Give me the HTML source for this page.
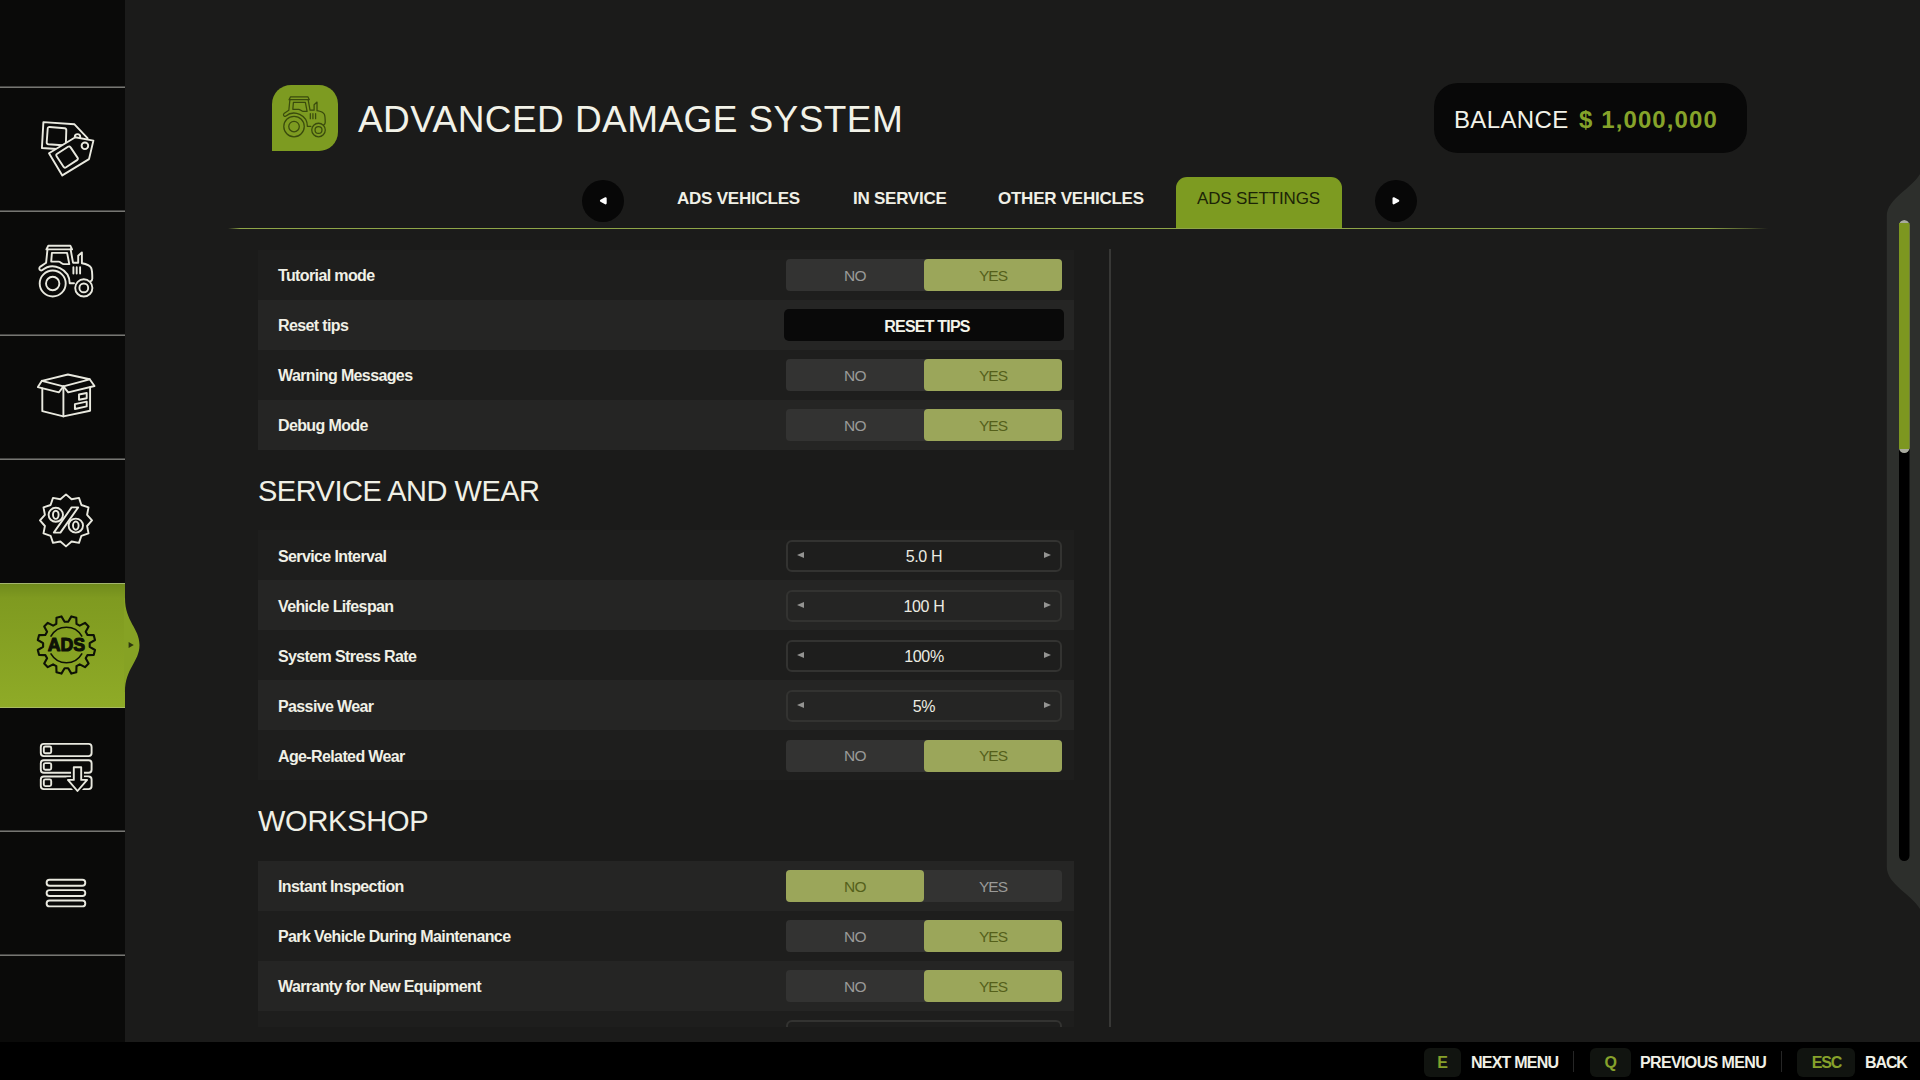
<!DOCTYPE html>
<html>
<head>
<meta charset="utf-8">
<title>Advanced Damage System</title>
<style>
*{box-sizing:border-box;margin:0;padding:0}
html,body{width:1920px;height:1080px;overflow:hidden;background:#1b1b1a}
body{position:relative;font-family:"Liberation Sans",sans-serif;color:#f0f0e6}
.abs{position:absolute}
/* sidebar */
#side{position:absolute;left:0;top:0;width:125px;height:1042px;background:#0a0a09}
.sline{position:absolute;left:0;width:125px;height:2px;background:linear-gradient(180deg,#454543 50%,#767672 50%)}
#sactive{position:absolute;left:0;top:583px;width:125px;height:125px;background:linear-gradient(180deg,#6f8a1c 0%,#7f9a20 12%,#8fab27 100%)}
.sicon{position:absolute;overflow:visible}
/* bottom bar */
#bottom{position:absolute;left:0;top:1042px;width:1920px;height:38px;background:#000}
.key{position:absolute;top:6px;height:29px;border-radius:6px;background:#111410;color:#86a12b;font-weight:700;font-size:16px;line-height:30px;letter-spacing:-.2px;text-align:center}
.klabel{position:absolute;top:6px;height:29px;line-height:29px;font-weight:700;font-size:16px;color:#f0f0e6;white-space:pre}
.ksep{position:absolute;top:9px;width:1px;height:21px;background:#262626}
/* header */
#hicon{position:absolute;left:272px;top:85px;width:66px;height:66px;background:#7d9b21;border-radius:19px 19px 19px 0}
#title{position:absolute;left:358px;top:99px;font-size:37px;line-height:42px;letter-spacing:.42px;white-space:pre;color:#f2f2e8}
#balance{position:absolute;left:1434px;top:83px;width:313px;height:70px;border-radius:24px;background:#080808}
#balance span{position:absolute;top:22.5px;line-height:28px;font-size:24px;white-space:pre}
/* tabs */
.tab{position:absolute;top:186.7px;height:24px;line-height:24px;font-size:17px;font-weight:700;white-space:pre;color:#f0f0e6}
#tabact{position:absolute;left:1176px;top:177px;width:166px;height:52px;border-radius:11px 11px 0 0;background:#7d9b21}
.circ{position:absolute;top:180px;width:42px;height:42px;border-radius:50%;background:#070707}
#gline{position:absolute;left:228px;top:227.5px;width:1540px;height:1.6px;background:linear-gradient(90deg,rgba(143,165,72,0) 0,#8fa548 12px,#8fa548 1480px,rgba(143,165,72,.45) 1520px,rgba(143,165,72,0) 1540px)}
/* list */
#list{position:absolute;left:258px;top:250px;width:816px;height:777px;overflow:hidden}
.row{position:absolute;left:0;width:816px;height:50px;background:#1e1e1d}
.row.alt{background:#252524}
.row .lbl{position:absolute;left:20px;top:0;height:50px;line-height:52px;font-size:16px;font-weight:700;letter-spacing:-.62px;white-space:pre;color:#f0f0e6}
.tog{position:absolute;left:528px;top:9px;width:276px;height:32px;border-radius:4px;background:#333332}
.tog span{position:absolute;top:0;width:138px;height:32px;line-height:33px;text-align:center;font-size:15.5px;letter-spacing:-.5px;color:#9a9a98;border-radius:4px}
.tog .n{left:0}.tog .y{left:138px;letter-spacing:-1px}
.tog .on{background:#9ba65a;color:#55601a}
.step{position:absolute;left:528px;top:9px;width:276px;height:32px;border-radius:6px;border:2px solid #333331;background:transparent}
.step .v{position:absolute;left:0;top:0;width:272px;height:28px;line-height:31px;text-align:center;font-size:16px;letter-spacing:-.3px;color:#ecece2}
.step i{position:absolute;top:10.6px;width:0;height:0;border-top:3.9px solid transparent;border-bottom:3.9px solid transparent}
.step i.l{left:9px;border-right:7px solid #949492}
.step i.r{right:9px;border-left:7px solid #949492}
.btn{position:absolute;left:526px;top:9px;width:280px;height:32px;border-radius:5px;background:#090909;text-align:center;line-height:35px;font-size:16px;font-weight:700;letter-spacing:-.8px;padding-left:6px;color:#f4f4ea}
.sec{position:absolute;left:0;height:40px;line-height:40px;font-size:29px;letter-spacing:.1px;white-space:pre;color:#f0f0e6}
#vdiv{position:absolute;left:1109px;top:249px;width:2px;height:778px;background:#383836}
.s2 .lbl{top:1px}
.s2 .tog,.s2 .step{top:9.5px}
.s2 .step .v{line-height:29px}
.s2 .tog span{line-height:31px}
</style>
</head>
<body>


<!-- SIDEBAR -->
<div id="side">
  <div class="sline" style="top:86px"></div>
  <div class="sline" style="top:210px"></div>
  <div class="sline" style="top:334px"></div>
  <div class="sline" style="top:458px"></div>
  <div id="sactive"><div style="position:absolute;left:0;top:0;width:125px;height:1px;background:#a3b56f"></div><div style="position:absolute;left:0;bottom:0;width:125px;height:1px;background:#a9bb62"></div></div>
  <div class="sline" style="top:830px"></div>
  <div class="sline" style="top:954px"></div>

  <!-- sidebar icons -->
  <svg class="sicon" style="top:108px;left:26px" width="80" height="80" viewBox="0 0 80 80" fill="none" stroke="#e9e9df" stroke-width="1.9" stroke-linejoin="round" stroke-linecap="round">
    <path d="M17.4 14.1 L48.5 16.3 L61.5 30.2 L60 43 L15.9 40 Z"/>
    <path d="M23.6 19 L38.6 20.3 Q40.4 20.5 40.3 22.3 L39.8 37.5 L22.4 36.2 Q20.6 36 20.7 34.2 L21.7 20.7 Q21.8 18.9 23.6 19 Z"/>
    <circle cx="51.5" cy="28.8" r="2.7"/>
    <path d="M23 45.2 L49.3 29.3 L67.4 32.6 L63 51.1 L36.3 67.4 Z" fill="#0a0a09"/>
    <path d="M31.2 45.7 L42 38.8 Q43.6 37.8 44.6 39.4 L51.5 49.6 Q52.5 51.1 51 52.1 L40.1 59.3 Q38.5 60.3 37.5 58.8 L30.6 48.2 Q29.6 46.7 31.2 45.7 Z"/>
    <circle cx="58.9" cy="37.8" r="3.3"/>
  </svg>
  <svg class="sicon" style="top:232px;left:26px" width="80" height="80" viewBox="0 0 80 80" stroke="#e9e9df" stroke-width="1.9"><g fill="none" stroke-linecap="round" stroke-linejoin="round">
      <path d="M22.3 13.7 L44.3 13.7 L46.1 17.4 L20.4 17.4 Z"/>
      <path d="M21.5 17.2 L20.1 30.8 L14.4 34.6 C12.9 35.7 13 37.5 14.3 38.3 C15 38.7 15.6 38.6 16 38.3 A17 17 0 0 1 43.7 51.3 L48 51.3"/>
      <path d="M44.6 17.2 L47 30.7 L52.2 30.7 L52.2 23.7 L55.9 20.4 L55.9 31.3 C60 32 64 33.5 65.2 36 C66.3 38.5 66.3 40 66.3 46.5 Q66.3 48.5 64.5 49.4"/>
      <path d="M25.9 20.9 L41.1 20.9 L43.3 32.1 L37.8 32.1 C36 32.1 34.5 29.6 32.5 29.6 L25.2 29.6 Z"/>
      <path d="M47.4 35.2 V41.5 M50.7 35.2 V41.5 M54.1 35.2 V41.5"/>
      <circle cx="26.7" cy="51.5" r="13"/><circle cx="26.7" cy="51.5" r="6.7"/>
      <circle cx="57.8" cy="55.9" r="8.6"/><circle cx="57.8" cy="55.9" r="4.4"/>
    </g></svg>
  <svg class="sicon" style="top:356px;left:26px" width="80" height="80" viewBox="0 0 80 80" fill="none" stroke="#e9e9df" stroke-width="1.9" stroke-linejoin="round" stroke-linecap="round">
    <path d="M15.9 24.8 L41.9 18.5 L63.7 23.3 L37.4 30.4 Z"/>
    <path d="M15.9 24.8 L11.9 31.1 L33 36.3 L37.4 30.4"/>
    <path d="M63.7 23.3 L68.5 30 L42.2 36.3 L37.4 30.4"/>
    <path d="M16.3 32.4 V55.2 L37.4 60.4 L64.1 54.8 V31.2"/>
    <path d="M37.4 30.4 V60.4"/>
    <path d="M53 38.5 L60.7 37 V42.2 L53 43.7 Z"/>
    <path d="M48.9 48.1 L60.7 45.6 V50.4 L48.9 53 Z"/>
  </svg>
  <svg class="sicon" style="top:480px;left:26px" width="80" height="80" viewBox="0 0 80 80" fill="none" stroke="#e9e9df" stroke-width="1.9" stroke-linejoin="round" stroke-linecap="round">
    <path d="M40.0 14.4 L45.6 19.3 L53.0 17.9 L55.4 25.0 L62.5 27.4 L61.1 34.8 L66.0 40.4 L61.1 46.0 L62.5 53.4 L55.4 55.8 L53.0 62.9 L45.6 61.5 L40.0 66.4 L34.4 61.5 L27.0 62.9 L24.6 55.8 L17.5 53.4 L18.9 46.0 L14.0 40.4 L18.9 34.8 L17.5 27.4 L24.6 25.0 L27.0 17.9 L34.4 19.3 Z"/>
    <ellipse cx="29.8" cy="34.8" rx="7.2" ry="7"/><ellipse cx="29.8" cy="34.8" rx="2.8" ry="4.1"/>
    <ellipse cx="49.8" cy="45.6" rx="7.2" ry="7"/><ellipse cx="49.8" cy="45.6" rx="2.8" ry="4.1"/>
    <path d="M45.6 27.4 L52.2 27.4 L34.4 52.6 L27.8 52.6 Z"/>
  </svg>
  <svg class="sicon" style="top:605px;left:26px" width="80" height="80" viewBox="0 0 80 80" fill="none" stroke="#0e1206" stroke-width="2.1" stroke-linejoin="round" stroke-linecap="round">
    <path d="M63.7 38.2 L69.0 35.0 L67.7 30.1 L61.5 29.9 L59.7 26.7 L62.6 21.4 L59.0 17.8 L53.7 20.7 L50.5 18.9 L50.3 12.7 L45.4 11.4 L42.2 16.7 L38.6 16.7 L35.4 11.4 L30.5 12.7 L30.3 18.9 L27.1 20.7 L21.8 17.8 L18.2 21.4 L21.1 26.7 L19.3 29.9 L13.1 30.1 L11.8 35.0 L17.1 38.2 L17.1 41.8 L11.8 45.0 L13.1 49.9 L19.3 50.1 L21.1 53.3 L18.2 58.6 L21.8 62.2 L27.1 59.3 L30.3 61.1 L30.5 67.3 L35.4 68.6 L38.6 63.3 L42.2 63.3 L45.4 68.6 L50.3 67.3 L50.5 61.1 L53.7 59.3 L59.0 62.2 L62.6 58.6 L59.7 53.3 L61.5 50.1 L67.7 49.9 L69.0 45.0 L63.7 41.8 Z"/>
    <path d="M25.0 31.1 A17.8 17.8 0 0 1 55.8 31.1" stroke-width="1.6"/>
    <path d="M25.0 48.9 A17.8 17.8 0 0 0 55.8 48.9" stroke-width="1.6"/>
    <text x="40.4" y="45.9" text-anchor="middle" font-family="Liberation Sans, sans-serif" font-weight="700" font-size="18.6" textLength="37.5" lengthAdjust="spacingAndGlyphs" fill="#0e1206" stroke="#0e1206" stroke-width="1.1">ADS</text>
  </svg>
  <svg class="sicon" style="top:728px;left:26px" width="80" height="80" viewBox="0 0 80 80" fill="none" stroke="#e9e9df" stroke-width="1.9" stroke-linejoin="round" stroke-linecap="round">
    <rect x="14.8" y="15.9" width="50.8" height="12.2" rx="3"/>
    <rect x="14.8" y="32.2" width="50.8" height="12.6" rx="3"/>
    <rect x="14.8" y="48.5" width="50.8" height="12.6" rx="3"/>
    <rect x="17.8" y="18.5" width="7.4" height="6.7" rx="1.5"/>
    <rect x="17.8" y="35.1" width="7.4" height="6.7" rx="1.5"/>
    <rect x="17.8" y="51.4" width="7.4" height="6.7" rx="1.5"/>
    <path d="M47.8 39.3 H55.2 V51.9 H61.1 L51.5 63 L41.9 51.9 H47.8 Z" fill="#0a0a09" stroke="#0a0a09" stroke-width="5.5"/>
    <path d="M47.8 39.3 H55.2 V51.9 H61.1 L51.5 63 L41.9 51.9 H47.8 Z" fill="#0a0a09"/>
  </svg>
  <svg class="sicon" style="top:852px;left:26px" width="80" height="80" viewBox="0 0 80 80" fill="none" stroke="#e9e9df" stroke-width="1.9">
    <rect x="20.6" y="27.8" width="38.7" height="5.9" rx="2.95"/>
    <rect x="20.6" y="38.1" width="38.7" height="5.9" rx="2.95"/>
    <rect x="20.6" y="48.5" width="38.7" height="5.9" rx="2.95"/>
  </svg>
</div>

<svg class="abs" style="left:120px;top:590px" width="30" height="110" viewBox="120 590 30 110">
  <path d="M124 598 L125 598 C125 622 139.5 628 139.5 645 C139.5 662 125 668 125 692 L124 692 Z" fill="#86a224"/>
  <path d="M128.6 642 L133.8 645 L128.6 648 Z" fill="#2c3610"/>
</svg>

<!-- HEADER -->
<div id="hicon"><svg width="63" height="63" viewBox="0 0 80 80" stroke="#3a4b0d" stroke-width="1.6" style="position:absolute;left:1px;top:1.2px"><g fill="none" stroke-linecap="round" stroke-linejoin="round">
      <path d="M22.3 13.7 L44.3 13.7 L46.1 17.4 L20.4 17.4 Z"/>
      <path d="M21.5 17.2 L20.1 30.8 L14.4 34.6 C12.9 35.7 13 37.5 14.3 38.3 C15 38.7 15.6 38.6 16 38.3 A17 17 0 0 1 43.7 51.3 L48 51.3"/>
      <path d="M44.6 17.2 L47 30.7 L52.2 30.7 L52.2 23.7 L55.9 20.4 L55.9 31.3 C60 32 64 33.5 65.2 36 C66.3 38.5 66.3 40 66.3 46.5 Q66.3 48.5 64.5 49.4"/>
      <path d="M25.9 20.9 L41.1 20.9 L43.3 32.1 L37.8 32.1 C36 32.1 34.5 29.6 32.5 29.6 L25.2 29.6 Z"/>
      <path d="M47.4 35.2 V41.5 M50.7 35.2 V41.5 M54.1 35.2 V41.5"/>
      <circle cx="26.7" cy="51.5" r="13"/><circle cx="26.7" cy="51.5" r="6.7"/>
      <circle cx="57.8" cy="55.9" r="8.6"/><circle cx="57.8" cy="55.9" r="4.4"/>
    </g></svg></div>
<div id="title">ADVANCED DAMAGE SYSTEM</div>
<div id="balance"><span style="left:20px;color:#f2f2e8;letter-spacing:.35px">BALANCE</span><span style="left:145px;color:#86a32a;font-weight:700;letter-spacing:1.1px">$ 1,000,000</span></div>

<!-- TABS -->
<div class="circ" style="left:581.5px"><svg width="42" height="42" viewBox="0 0 42 42" style="position:absolute;left:0;top:0"><path d="M23.6 18.3 L23.6 23.3 L19 20.8 Z" fill="#fff" stroke="#fff" stroke-width="2.2" stroke-linejoin="round"/></svg></div>
<div class="circ" style="left:1375.3px"><svg width="42" height="42" viewBox="0 0 42 42" style="position:absolute;left:0;top:0"><path d="M18.6 18.3 L18.6 23.3 L23.2 20.8 Z" fill="#fff" stroke="#fff" stroke-width="2.2" stroke-linejoin="round"/></svg></div>
<div id="tabact"></div>
<div class="tab" style="left:677px;letter-spacing:-.23px">ADS VEHICLES</div>
<div class="tab" style="left:853px;letter-spacing:-.25px">IN SERVICE</div>
<div class="tab" style="left:998px;letter-spacing:-.25px">OTHER VEHICLES</div>
<div class="tab" style="left:1197px;letter-spacing:-.14px;font-weight:400;color:#1c2407">ADS SETTINGS</div>
<div id="gline"></div>

<!-- LIST -->
<div id="list">
  <div class="row" style="top:0"><div class="lbl">Tutorial mode</div><div class="tog"><span class="n">NO</span><span class="y on">YES</span></div></div>
  <div class="row alt" style="top:50px"><div class="lbl">Reset tips</div><div class="btn">RESET TIPS</div></div>
  <div class="row" style="top:100px"><div class="lbl">Warning Messages</div><div class="tog"><span class="n">NO</span><span class="y on">YES</span></div></div>
  <div class="row alt" style="top:150px"><div class="lbl">Debug Mode</div><div class="tog"><span class="n">NO</span><span class="y on">YES</span></div></div>

  <div class="sec" style="top:220.5px;letter-spacing:-.5px">SERVICE AND WEAR</div>
  <div class="row s2" style="top:280.3px"><div class="lbl">Service Interval</div><div class="step"><i class="l"></i><div class="v">5.0 H</div><i class="r"></i></div></div>
  <div class="row alt s2" style="top:330.3px"><div class="lbl">Vehicle Lifespan</div><div class="step"><i class="l"></i><div class="v">100 H</div><i class="r"></i></div></div>
  <div class="row s2" style="top:380.3px"><div class="lbl">System Stress Rate</div><div class="step"><i class="l"></i><div class="v">100%</div><i class="r"></i></div></div>
  <div class="row alt s2" style="top:430.3px"><div class="lbl">Passive Wear</div><div class="step"><i class="l"></i><div class="v">5%</div><i class="r"></i></div></div>
  <div class="row s2" style="top:480.3px"><div class="lbl">Age-Related Wear</div><div class="tog"><span class="n">NO</span><span class="y on">YES</span></div></div>

  <div class="sec" style="top:551px;letter-spacing:-.25px">WORKSHOP</div>
  <div class="row alt s3" style="top:610.6px"><div class="lbl">Instant Inspection</div><div class="tog"><span class="n on">NO</span><span class="y">YES</span></div></div>
  <div class="row s3" style="top:660.6px"><div class="lbl">Park Vehicle During Maintenance</div><div class="tog"><span class="n">NO</span><span class="y on">YES</span></div></div>
  <div class="row alt s3" style="top:710.6px"><div class="lbl">Warranty for New Equipment</div><div class="tog"><span class="n">NO</span><span class="y on">YES</span></div></div>
  <div class="row s3" style="top:760.6px"><div class="step"></div></div>
</div>
<div id="vdiv"></div>

<!-- SCROLLBAR -->
<svg class="abs" style="left:1880px;top:160px" width="40" height="760" viewBox="1880 160 40 760">
  <path d="M1920 174 C1911 189 1886.8 199 1886.8 216 L1886.8 867 C1886.8 884 1911 894 1920 909 Z" fill="#2d2f2c"/>
  <rect x="1899" y="220" width="10.5" height="641" rx="5.25" fill="#000"/>
  <rect x="1899" y="220" width="10.5" height="233" rx="5.25" fill="#a9ab9f"/>
  <rect x="1899" y="223" width="10.5" height="226" fill="#7d9720"/>
</svg>

<!-- BOTTOM BAR -->
<div id="bottom">
  <div class="key" style="left:1424px;width:37px">E</div>
  <div class="klabel" style="left:1471px;letter-spacing:-.78px">NEXT MENU</div>
  <div class="ksep" style="left:1573px"></div>
  <div class="key" style="left:1590px;width:41px">Q</div>
  <div class="klabel" style="left:1640px;letter-spacing:-.63px">PREVIOUS MENU</div>
  <div class="ksep" style="left:1781px"></div>
  <div class="key" style="left:1797px;width:58px;letter-spacing:-1.2px;padding-left:1px">ESC</div>
  <div class="klabel" style="left:1865px;letter-spacing:-1.1px">BACK</div>
</div>

</body>
</html>
